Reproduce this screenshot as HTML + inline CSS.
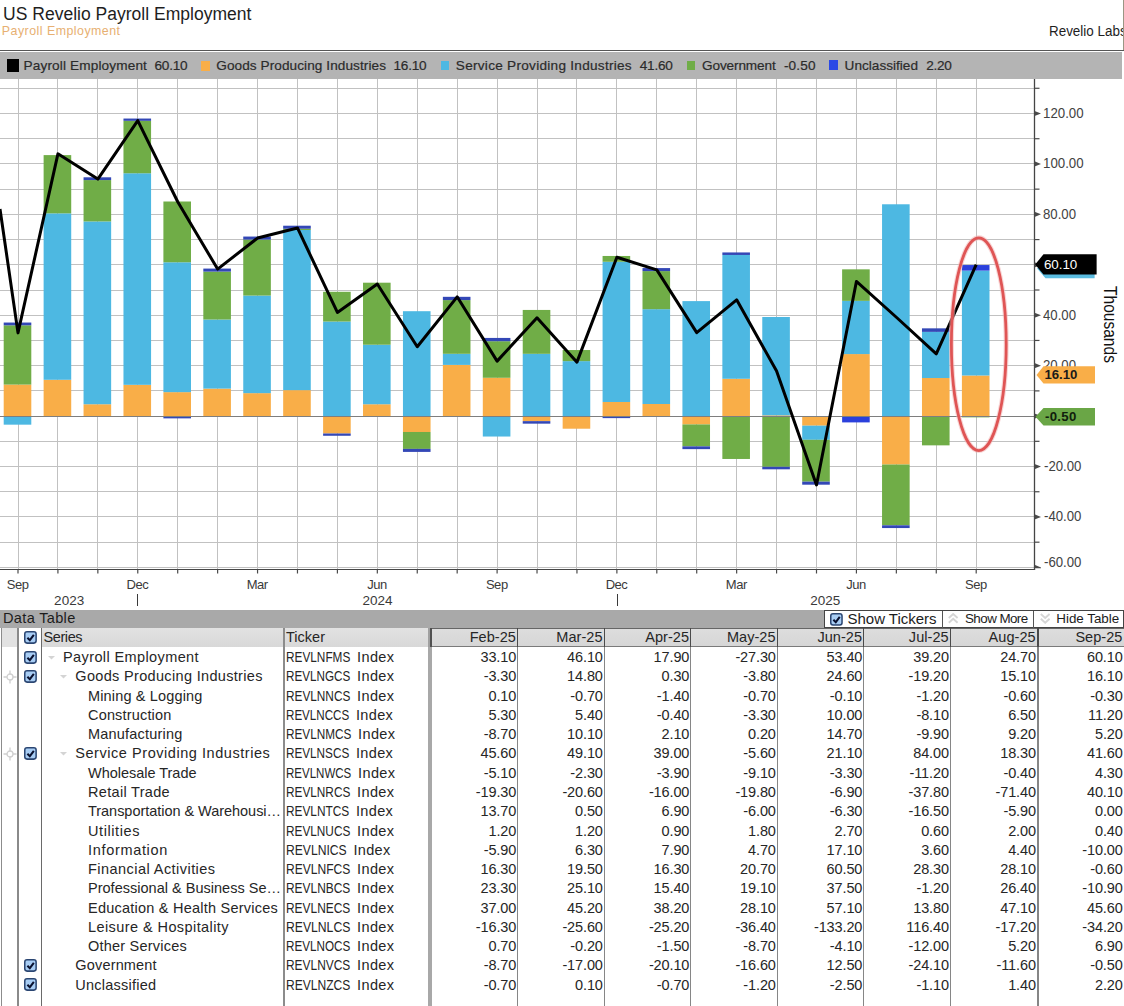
<!DOCTYPE html>
<html><head><meta charset="utf-8"><title>US Revelio Payroll Employment</title>
<style>
html,body{margin:0;padding:0;background:#fff;}
html,body{width:1124px;height:1006px;overflow:hidden;}
body{font-family:"Liberation Sans",sans-serif;}
#root{position:absolute;left:0;top:0;width:1124px;height:1006px;overflow:hidden;background:#fff;}
.t{position:absolute;white-space:pre;font-family:"Liberation Sans",sans-serif;}
.b{position:absolute;}
svg{position:absolute;left:0;top:0;}
</style></head><body><div id="root">
<div class="t" style="left:3.40px;top:4px;font-size:18px;line-height:20px;color:#1e1e1e;transform:scaleX(0.9738);transform-origin:left top;">US Revelio Payroll Employment</div>
<div class="t" style="left:1.80px;top:24px;font-size:12.4px;line-height:14px;color:#e7b072;letter-spacing:0.474px;">Payroll Employment</div>
<div class="t" style="left:1049.40px;top:23px;font-size:14px;line-height:16px;color:#1e1e1e;transform:scaleX(0.9588);transform-origin:left top;">Revelio Labs</div>
<div class="b" style="left:1122.7px;top:0;width:1px;height:50px;background:#9a9684"></div>
<div class="b" style="left:0;top:49.5px;width:1124px;height:1.2px;background:#555"></div>
<div class="b" style="left:0;top:51.5px;width:1122px;height:27.3px;background:#b4b4b4"></div>
<div class="b" style="left:7px;top:59.2px;width:12px;height:12.7px;background:#000"></div>
<div class="t" style="left:23.60px;top:58px;font-size:13.6px;line-height:15px;color:#2b2b2b;letter-spacing:0.143px;-webkit-text-stroke:0.2px #2b2b2b;">Payroll Employment</div>
<div class="t" style="left:154.50px;top:58px;font-size:13.6px;line-height:15px;color:#2b2b2b;letter-spacing:-0.247px;-webkit-text-stroke:0.2px #2b2b2b;">60.10</div>
<div class="b" style="left:200.8px;top:61px;width:9.6px;height:9.6px;background:#F9AE48"></div>
<div class="t" style="left:216.30px;top:58px;font-size:13.6px;line-height:15px;color:#2b2b2b;letter-spacing:0.076px;-webkit-text-stroke:0.2px #2b2b2b;">Goods Producing Industries</div>
<div class="t" style="left:393.50px;top:58px;font-size:13.6px;line-height:15px;color:#2b2b2b;letter-spacing:-0.247px;-webkit-text-stroke:0.2px #2b2b2b;">16.10</div>
<div class="b" style="left:440.5px;top:60.8px;width:8.6px;height:9.2px;background:#4DB8E2"></div>
<div class="t" style="left:455.80px;top:58px;font-size:13.6px;line-height:15px;color:#2b2b2b;letter-spacing:0.273px;-webkit-text-stroke:0.2px #2b2b2b;">Service Providing Industries</div>
<div class="t" style="left:639.80px;top:58px;font-size:13.6px;line-height:15px;color:#2b2b2b;letter-spacing:-0.247px;-webkit-text-stroke:0.2px #2b2b2b;">41.60</div>
<div class="b" style="left:686.8px;top:60.8px;width:8.6px;height:9.2px;background:#70AD47"></div>
<div class="t" style="left:702.00px;top:58px;font-size:13.6px;line-height:15px;color:#2b2b2b;letter-spacing:-0.123px;-webkit-text-stroke:0.2px #2b2b2b;">Government</div>
<div class="t" style="left:783.90px;top:58px;font-size:13.6px;line-height:15px;color:#2b2b2b;letter-spacing:0.160px;-webkit-text-stroke:0.2px #2b2b2b;">-0.50</div>
<div class="b" style="left:829.4px;top:60.2px;width:9px;height:9.8px;background:#2b49e6"></div>
<div class="t" style="left:844.60px;top:58px;font-size:13.6px;line-height:15px;color:#2b2b2b;letter-spacing:0.007px;-webkit-text-stroke:0.2px #2b2b2b;">Unclassified</div>
<div class="t" style="left:926.30px;top:58px;font-size:13.6px;line-height:15px;color:#2b2b2b;letter-spacing:-0.317px;-webkit-text-stroke:0.2px #2b2b2b;">2.20</div>
<svg width="1124" height="612" viewBox="0 0 1124 612">
<line x1="0" x2="1034.5" y1="567.50" y2="567.50" stroke="#c1c1c1" stroke-width="1"/>
<line x1="0" x2="1034.5" y1="542.50" y2="542.50" stroke="#c1c1c1" stroke-width="1"/>
<line x1="0" x2="1034.5" y1="516.50" y2="516.50" stroke="#c1c1c1" stroke-width="1"/>
<line x1="0" x2="1034.5" y1="491.50" y2="491.50" stroke="#c1c1c1" stroke-width="1"/>
<line x1="0" x2="1034.5" y1="466.50" y2="466.50" stroke="#c1c1c1" stroke-width="1"/>
<line x1="0" x2="1034.5" y1="441.50" y2="441.50" stroke="#c1c1c1" stroke-width="1"/>
<line x1="0" x2="1034.5" y1="390.50" y2="390.50" stroke="#c1c1c1" stroke-width="1"/>
<line x1="0" x2="1034.5" y1="365.50" y2="365.50" stroke="#c1c1c1" stroke-width="1"/>
<line x1="0" x2="1034.5" y1="340.50" y2="340.50" stroke="#c1c1c1" stroke-width="1"/>
<line x1="0" x2="1034.5" y1="315.50" y2="315.50" stroke="#c1c1c1" stroke-width="1"/>
<line x1="0" x2="1034.5" y1="290.50" y2="290.50" stroke="#c1c1c1" stroke-width="1"/>
<line x1="0" x2="1034.5" y1="264.50" y2="264.50" stroke="#c1c1c1" stroke-width="1"/>
<line x1="0" x2="1034.5" y1="239.50" y2="239.50" stroke="#c1c1c1" stroke-width="1"/>
<line x1="0" x2="1034.5" y1="214.50" y2="214.50" stroke="#c1c1c1" stroke-width="1"/>
<line x1="0" x2="1034.5" y1="189.50" y2="189.50" stroke="#c1c1c1" stroke-width="1"/>
<line x1="0" x2="1034.5" y1="163.50" y2="163.50" stroke="#c1c1c1" stroke-width="1"/>
<line x1="0" x2="1034.5" y1="138.50" y2="138.50" stroke="#c1c1c1" stroke-width="1"/>
<line x1="0" x2="1034.5" y1="113.50" y2="113.50" stroke="#c1c1c1" stroke-width="1"/>
<line x1="0" x2="1034.5" y1="88.50" y2="88.50" stroke="#c1c1c1" stroke-width="1"/>
<line x1="18.50" x2="18.50" y1="79" y2="569.5" stroke="#c1c1c1" stroke-width="1"/>
<line x1="57.50" x2="57.50" y1="79" y2="569.5" stroke="#c1c1c1" stroke-width="1"/>
<line x1="97.50" x2="97.50" y1="79" y2="569.5" stroke="#c1c1c1" stroke-width="1"/>
<line x1="137.50" x2="137.50" y1="79" y2="569.5" stroke="#c1c1c1" stroke-width="1"/>
<line x1="177.50" x2="177.50" y1="79" y2="569.5" stroke="#c1c1c1" stroke-width="1"/>
<line x1="217.50" x2="217.50" y1="79" y2="569.5" stroke="#c1c1c1" stroke-width="1"/>
<line x1="257.50" x2="257.50" y1="79" y2="569.5" stroke="#c1c1c1" stroke-width="1"/>
<line x1="297.50" x2="297.50" y1="79" y2="569.5" stroke="#c1c1c1" stroke-width="1"/>
<line x1="337.50" x2="337.50" y1="79" y2="569.5" stroke="#c1c1c1" stroke-width="1"/>
<line x1="377.50" x2="377.50" y1="79" y2="569.5" stroke="#c1c1c1" stroke-width="1"/>
<line x1="417.50" x2="417.50" y1="79" y2="569.5" stroke="#c1c1c1" stroke-width="1"/>
<line x1="457.50" x2="457.50" y1="79" y2="569.5" stroke="#c1c1c1" stroke-width="1"/>
<line x1="497.50" x2="497.50" y1="79" y2="569.5" stroke="#c1c1c1" stroke-width="1"/>
<line x1="537.50" x2="537.50" y1="79" y2="569.5" stroke="#c1c1c1" stroke-width="1"/>
<line x1="576.50" x2="576.50" y1="79" y2="569.5" stroke="#c1c1c1" stroke-width="1"/>
<line x1="616.50" x2="616.50" y1="79" y2="569.5" stroke="#c1c1c1" stroke-width="1"/>
<line x1="656.50" x2="656.50" y1="79" y2="569.5" stroke="#c1c1c1" stroke-width="1"/>
<line x1="696.50" x2="696.50" y1="79" y2="569.5" stroke="#c1c1c1" stroke-width="1"/>
<line x1="736.50" x2="736.50" y1="79" y2="569.5" stroke="#c1c1c1" stroke-width="1"/>
<line x1="776.50" x2="776.50" y1="79" y2="569.5" stroke="#c1c1c1" stroke-width="1"/>
<line x1="816.50" x2="816.50" y1="79" y2="569.5" stroke="#c1c1c1" stroke-width="1"/>
<line x1="856.50" x2="856.50" y1="79" y2="569.5" stroke="#c1c1c1" stroke-width="1"/>
<line x1="896.50" x2="896.50" y1="79" y2="569.5" stroke="#c1c1c1" stroke-width="1"/>
<line x1="936.50" x2="936.50" y1="79" y2="569.5" stroke="#c1c1c1" stroke-width="1"/>
<line x1="976.50" x2="976.50" y1="79" y2="569.5" stroke="#c1c1c1" stroke-width="1"/>
<rect x="3.70" y="384.58" width="27.6" height="31.52" fill="#F9AE48"/>
<rect x="3.70" y="416.10" width="27.6" height="8.57" fill="#4DB8E2"/>
<rect x="3.70" y="325.32" width="27.6" height="59.26" fill="#70AD47"/>
<rect x="3.70" y="322.54" width="27.6" height="2.77" fill="#3347B6"/>
<rect x="43.62" y="379.79" width="27.6" height="36.31" fill="#F9AE48"/>
<rect x="43.62" y="213.36" width="27.6" height="166.43" fill="#4DB8E2"/>
<rect x="43.62" y="155.10" width="27.6" height="58.25" fill="#70AD47"/>
<rect x="83.55" y="404.25" width="27.6" height="11.85" fill="#F9AE48"/>
<rect x="83.55" y="221.42" width="27.6" height="182.82" fill="#4DB8E2"/>
<rect x="83.55" y="180.07" width="27.6" height="41.36" fill="#70AD47"/>
<rect x="83.55" y="177.30" width="27.6" height="2.77" fill="#3347B6"/>
<rect x="123.47" y="384.83" width="27.6" height="31.27" fill="#F9AE48"/>
<rect x="123.47" y="173.26" width="27.6" height="211.57" fill="#4DB8E2"/>
<rect x="123.47" y="120.81" width="27.6" height="52.45" fill="#70AD47"/>
<rect x="123.47" y="118.54" width="27.6" height="2.27" fill="#3347B6"/>
<rect x="163.40" y="392.14" width="27.6" height="23.96" fill="#F9AE48"/>
<rect x="163.40" y="262.28" width="27.6" height="129.87" fill="#4DB8E2"/>
<rect x="163.40" y="201.50" width="27.6" height="60.77" fill="#70AD47"/>
<rect x="163.40" y="416.10" width="27.6" height="2.27" fill="#3347B6"/>
<rect x="203.32" y="388.61" width="27.6" height="27.49" fill="#F9AE48"/>
<rect x="203.32" y="319.52" width="27.6" height="69.09" fill="#4DB8E2"/>
<rect x="203.32" y="271.61" width="27.6" height="47.91" fill="#70AD47"/>
<rect x="203.32" y="268.58" width="27.6" height="3.03" fill="#3347B6"/>
<rect x="243.25" y="393.15" width="27.6" height="22.95" fill="#F9AE48"/>
<rect x="243.25" y="295.56" width="27.6" height="97.59" fill="#4DB8E2"/>
<rect x="243.25" y="239.58" width="27.6" height="55.98" fill="#70AD47"/>
<rect x="243.25" y="236.55" width="27.6" height="3.03" fill="#3347B6"/>
<rect x="283.17" y="390.13" width="27.6" height="25.97" fill="#F9AE48"/>
<rect x="283.17" y="230.00" width="27.6" height="160.13" fill="#4DB8E2"/>
<rect x="283.17" y="228.74" width="27.6" height="1.26" fill="#70AD47"/>
<rect x="283.17" y="225.71" width="27.6" height="3.03" fill="#3347B6"/>
<rect x="323.10" y="416.10" width="27.6" height="17.40" fill="#F9AE48"/>
<rect x="323.10" y="321.54" width="27.6" height="94.56" fill="#4DB8E2"/>
<rect x="323.10" y="291.78" width="27.6" height="29.76" fill="#70AD47"/>
<rect x="323.10" y="433.50" width="27.6" height="2.27" fill="#3347B6"/>
<rect x="363.02" y="404.25" width="27.6" height="11.85" fill="#F9AE48"/>
<rect x="363.02" y="344.74" width="27.6" height="59.51" fill="#4DB8E2"/>
<rect x="363.02" y="282.70" width="27.6" height="62.03" fill="#70AD47"/>
<rect x="402.95" y="416.10" width="27.6" height="15.89" fill="#F9AE48"/>
<rect x="402.95" y="311.20" width="27.6" height="104.90" fill="#4DB8E2"/>
<rect x="402.95" y="431.99" width="27.6" height="16.90" fill="#70AD47"/>
<rect x="402.95" y="448.88" width="27.6" height="3.03" fill="#3347B6"/>
<rect x="442.87" y="364.91" width="27.6" height="51.19" fill="#F9AE48"/>
<rect x="442.87" y="353.81" width="27.6" height="11.10" fill="#4DB8E2"/>
<rect x="442.87" y="300.10" width="27.6" height="53.71" fill="#70AD47"/>
<rect x="442.87" y="296.82" width="27.6" height="3.28" fill="#3347B6"/>
<rect x="482.80" y="377.77" width="27.6" height="38.33" fill="#F9AE48"/>
<rect x="482.80" y="416.10" width="27.6" height="20.43" fill="#4DB8E2"/>
<rect x="482.80" y="341.21" width="27.6" height="36.56" fill="#70AD47"/>
<rect x="482.80" y="337.93" width="27.6" height="3.28" fill="#3347B6"/>
<rect x="522.73" y="416.10" width="27.6" height="5.04" fill="#F9AE48"/>
<rect x="522.73" y="353.81" width="27.6" height="62.29" fill="#4DB8E2"/>
<rect x="522.73" y="309.94" width="27.6" height="43.88" fill="#70AD47"/>
<rect x="522.73" y="421.14" width="27.6" height="2.52" fill="#3347B6"/>
<rect x="562.65" y="416.10" width="27.6" height="12.61" fill="#F9AE48"/>
<rect x="562.65" y="361.13" width="27.6" height="54.97" fill="#4DB8E2"/>
<rect x="562.65" y="350.03" width="27.6" height="11.10" fill="#70AD47"/>
<rect x="602.58" y="401.98" width="27.6" height="14.12" fill="#F9AE48"/>
<rect x="602.58" y="261.77" width="27.6" height="140.21" fill="#4DB8E2"/>
<rect x="602.58" y="255.97" width="27.6" height="5.80" fill="#70AD47"/>
<rect x="602.58" y="416.10" width="27.6" height="2.02" fill="#3347B6"/>
<rect x="642.50" y="404.00" width="27.6" height="12.10" fill="#F9AE48"/>
<rect x="642.50" y="309.18" width="27.6" height="94.82" fill="#4DB8E2"/>
<rect x="642.50" y="271.10" width="27.6" height="38.08" fill="#70AD47"/>
<rect x="642.50" y="268.08" width="27.6" height="3.03" fill="#3347B6"/>
<rect x="682.42" y="416.10" width="27.6" height="8.32" fill="#F9AE48"/>
<rect x="682.42" y="301.11" width="27.6" height="114.99" fill="#4DB8E2"/>
<rect x="682.42" y="424.42" width="27.6" height="21.94" fill="#70AD47"/>
<rect x="682.42" y="446.36" width="27.6" height="2.77" fill="#3347B6"/>
<rect x="722.35" y="378.78" width="27.6" height="37.32" fill="#F9AE48"/>
<rect x="722.35" y="254.96" width="27.6" height="123.82" fill="#4DB8E2"/>
<rect x="722.35" y="416.10" width="27.6" height="42.87" fill="#70AD47"/>
<rect x="722.35" y="252.44" width="27.6" height="2.52" fill="#3347B6"/>
<rect x="762.27" y="415.34" width="27.6" height="1.20" fill="#F9AE48"/>
<rect x="762.27" y="317.00" width="27.6" height="98.35" fill="#4DB8E2"/>
<rect x="762.27" y="416.10" width="27.6" height="50.69" fill="#70AD47"/>
<rect x="762.27" y="466.79" width="27.6" height="2.52" fill="#3347B6"/>
<rect x="802.20" y="416.10" width="27.6" height="9.58" fill="#F9AE48"/>
<rect x="802.20" y="425.68" width="27.6" height="14.12" fill="#4DB8E2"/>
<rect x="802.20" y="439.80" width="27.6" height="41.86" fill="#70AD47"/>
<rect x="802.20" y="481.66" width="27.6" height="3.03" fill="#3347B6"/>
<rect x="842.12" y="354.07" width="27.6" height="62.03" fill="#F9AE48"/>
<rect x="842.12" y="300.86" width="27.6" height="53.21" fill="#4DB8E2"/>
<rect x="842.12" y="269.34" width="27.6" height="31.52" fill="#70AD47"/>
<rect x="842.12" y="416.10" width="27.6" height="6.30" fill="#2B40DC"/>
<rect x="882.05" y="416.10" width="27.6" height="48.42" fill="#F9AE48"/>
<rect x="882.05" y="204.28" width="27.6" height="211.82" fill="#4DB8E2"/>
<rect x="882.05" y="464.52" width="27.6" height="60.77" fill="#70AD47"/>
<rect x="882.05" y="525.29" width="27.6" height="2.77" fill="#3347B6"/>
<rect x="921.98" y="378.02" width="27.6" height="38.08" fill="#F9AE48"/>
<rect x="921.98" y="331.88" width="27.6" height="46.15" fill="#4DB8E2"/>
<rect x="921.98" y="416.10" width="27.6" height="29.25" fill="#70AD47"/>
<rect x="921.98" y="328.34" width="27.6" height="3.53" fill="#3347B6"/>
<rect x="961.90" y="375.50" width="27.6" height="40.60" fill="#F9AE48"/>
<rect x="961.90" y="270.60" width="27.6" height="104.90" fill="#4DB8E2"/>
<rect x="961.90" y="416.10" width="27.6" height="1.26" fill="#70AD47"/>
<rect x="961.90" y="265.05" width="27.6" height="5.55" fill="#2B40DC"/>
<line x1="0" x2="1034.5" y1="416.5" y2="416.5" stroke="#7e7e7e" stroke-width="1"/>
<polyline fill="none" stroke="#000" stroke-width="3" stroke-linejoin="round" stroke-linecap="butt" points="0.00,209.00 18.00,332.88 57.92,153.84 97.85,179.06 137.77,120.56 177.70,201.76 217.62,269.08 257.55,238.07 297.47,227.98 337.40,312.46 377.32,283.96 417.25,346.75 457.17,296.82 497.10,361.13 537.02,317.75 576.95,362.14 616.88,257.23 656.80,269.84 696.72,332.63 736.65,299.85 776.57,370.96 816.50,484.94 856.42,281.44 896.35,317.25 936.27,353.81 976.20,264.55"/>
<ellipse cx="978.8" cy="344.2" rx="27.4" ry="106.4" fill="none" stroke="#f3b5b5" stroke-width="5" opacity="0.55"/>
<ellipse cx="978.8" cy="344.2" rx="27.4" ry="106.4" fill="none" stroke="#df5555" stroke-width="2.8"/>
<line x1="1034.5" x2="1034.5" y1="79" y2="570.0" stroke="#454545" stroke-width="1.3"/>
<line x1="0" x2="1035.1" y1="569.5" y2="569.5" stroke="#454545" stroke-width="1.1"/>
<line x1="18.00" x2="18.00" y1="569.5" y2="573.5" stroke="#4a4a4a" stroke-width="1.2"/>
<line x1="57.92" x2="57.92" y1="569.5" y2="573.5" stroke="#4a4a4a" stroke-width="1.2"/>
<line x1="97.85" x2="97.85" y1="569.5" y2="573.5" stroke="#4a4a4a" stroke-width="1.2"/>
<line x1="137.77" x2="137.77" y1="569.5" y2="573.5" stroke="#4a4a4a" stroke-width="1.2"/>
<line x1="177.70" x2="177.70" y1="569.5" y2="573.5" stroke="#4a4a4a" stroke-width="1.2"/>
<line x1="217.62" x2="217.62" y1="569.5" y2="573.5" stroke="#4a4a4a" stroke-width="1.2"/>
<line x1="257.55" x2="257.55" y1="569.5" y2="573.5" stroke="#4a4a4a" stroke-width="1.2"/>
<line x1="297.47" x2="297.47" y1="569.5" y2="573.5" stroke="#4a4a4a" stroke-width="1.2"/>
<line x1="337.40" x2="337.40" y1="569.5" y2="573.5" stroke="#4a4a4a" stroke-width="1.2"/>
<line x1="377.32" x2="377.32" y1="569.5" y2="573.5" stroke="#4a4a4a" stroke-width="1.2"/>
<line x1="417.25" x2="417.25" y1="569.5" y2="573.5" stroke="#4a4a4a" stroke-width="1.2"/>
<line x1="457.17" x2="457.17" y1="569.5" y2="573.5" stroke="#4a4a4a" stroke-width="1.2"/>
<line x1="497.10" x2="497.10" y1="569.5" y2="573.5" stroke="#4a4a4a" stroke-width="1.2"/>
<line x1="537.02" x2="537.02" y1="569.5" y2="573.5" stroke="#4a4a4a" stroke-width="1.2"/>
<line x1="576.95" x2="576.95" y1="569.5" y2="573.5" stroke="#4a4a4a" stroke-width="1.2"/>
<line x1="616.88" x2="616.88" y1="569.5" y2="573.5" stroke="#4a4a4a" stroke-width="1.2"/>
<line x1="656.80" x2="656.80" y1="569.5" y2="573.5" stroke="#4a4a4a" stroke-width="1.2"/>
<line x1="696.72" x2="696.72" y1="569.5" y2="573.5" stroke="#4a4a4a" stroke-width="1.2"/>
<line x1="736.65" x2="736.65" y1="569.5" y2="573.5" stroke="#4a4a4a" stroke-width="1.2"/>
<line x1="776.57" x2="776.57" y1="569.5" y2="573.5" stroke="#4a4a4a" stroke-width="1.2"/>
<line x1="816.50" x2="816.50" y1="569.5" y2="573.5" stroke="#4a4a4a" stroke-width="1.2"/>
<line x1="856.42" x2="856.42" y1="569.5" y2="573.5" stroke="#4a4a4a" stroke-width="1.2"/>
<line x1="896.35" x2="896.35" y1="569.5" y2="573.5" stroke="#4a4a4a" stroke-width="1.2"/>
<line x1="936.27" x2="936.27" y1="569.5" y2="573.5" stroke="#4a4a4a" stroke-width="1.2"/>
<line x1="976.20" x2="976.20" y1="569.5" y2="573.5" stroke="#4a4a4a" stroke-width="1.2"/>
<path d="M1034.5 564.80 L1041.0 567.40 L1041.0 568.20 L1034.5 568.20 Z" fill="#4a4a4a"/>
<line x1="1034.5" x2="1039.5" y1="542.19" y2="542.19" stroke="#4a4a4a" stroke-width="1.2"/>
<path d="M1034.5 514.37 L1041.0 516.97 L1034.5 519.57 Z" fill="#4a4a4a"/>
<line x1="1034.5" x2="1039.5" y1="491.75" y2="491.75" stroke="#4a4a4a" stroke-width="1.2"/>
<path d="M1034.5 463.93 L1041.0 466.53 L1034.5 469.13 Z" fill="#4a4a4a"/>
<line x1="1034.5" x2="1039.5" y1="441.32" y2="441.32" stroke="#4a4a4a" stroke-width="1.2"/>
<path d="M1034.5 413.50 L1041.0 416.10 L1034.5 418.70 Z" fill="#4a4a4a"/>
<line x1="1034.5" x2="1039.5" y1="390.88" y2="390.88" stroke="#4a4a4a" stroke-width="1.2"/>
<path d="M1034.5 363.07 L1041.0 365.67 L1034.5 368.27 Z" fill="#4a4a4a"/>
<line x1="1034.5" x2="1039.5" y1="340.45" y2="340.45" stroke="#4a4a4a" stroke-width="1.2"/>
<path d="M1034.5 312.63 L1041.0 315.23 L1034.5 317.83 Z" fill="#4a4a4a"/>
<line x1="1034.5" x2="1039.5" y1="290.01" y2="290.01" stroke="#4a4a4a" stroke-width="1.2"/>
<path d="M1034.5 262.20 L1041.0 264.80 L1034.5 267.40 Z" fill="#4a4a4a"/>
<line x1="1034.5" x2="1039.5" y1="239.58" y2="239.58" stroke="#4a4a4a" stroke-width="1.2"/>
<path d="M1034.5 211.76 L1041.0 214.36 L1034.5 216.96 Z" fill="#4a4a4a"/>
<line x1="1034.5" x2="1039.5" y1="189.15" y2="189.15" stroke="#4a4a4a" stroke-width="1.2"/>
<path d="M1034.5 161.33 L1041.0 163.93 L1034.5 166.53 Z" fill="#4a4a4a"/>
<line x1="1034.5" x2="1039.5" y1="138.71" y2="138.71" stroke="#4a4a4a" stroke-width="1.2"/>
<path d="M1034.5 110.90 L1041.0 113.50 L1034.5 116.10 Z" fill="#4a4a4a"/>
<line x1="1034.5" x2="1039.5" y1="88.28" y2="88.28" stroke="#4a4a4a" stroke-width="1.2"/>
</svg>
<div class="t" style="left:1044.20px;top:554px;font-size:14px;line-height:16px;color:#424242;transform:scaleX(0.9421);transform-origin:left top;">-60.00</div>
<div class="t" style="left:1044.20px;top:508px;font-size:14px;line-height:16px;color:#424242;transform:scaleX(0.9421);transform-origin:left top;">-40.00</div>
<div class="t" style="left:1044.20px;top:458px;font-size:14px;line-height:16px;color:#424242;transform:scaleX(0.9421);transform-origin:left top;">-20.00</div>
<div class="t" style="left:1043.20px;top:407px;font-size:14px;line-height:16px;color:#424242;transform:scaleX(1.2111);transform-origin:left top;">0.00</div>
<div class="t" style="left:1043.20px;top:357px;font-size:14px;line-height:16px;color:#424242;transform:scaleX(0.9419);transform-origin:left top;">20.00</div>
<div class="t" style="left:1043.20px;top:307px;font-size:14px;line-height:16px;color:#424242;transform:scaleX(0.9419);transform-origin:left top;">40.00</div>
<div class="t" style="left:1043.20px;top:256px;font-size:14px;line-height:16px;color:#424242;transform:scaleX(0.9419);transform-origin:left top;">60.00</div>
<div class="t" style="left:1043.20px;top:206px;font-size:14px;line-height:16px;color:#424242;transform:scaleX(0.9419);transform-origin:left top;">80.00</div>
<div class="t" style="left:1043.20px;top:155px;font-size:14px;line-height:16px;color:#424242;transform:scaleX(0.9481);transform-origin:left top;">100.00</div>
<div class="t" style="left:1043.20px;top:105px;font-size:14px;line-height:16px;color:#424242;transform:scaleX(0.9481);transform-origin:left top;">120.00</div>
<svg width="1124" height="612" viewBox="0 0 1124 612">
<path d="M1037.2 268.60 L1045.5 258.90 L1094.6 258.90 L1094.6 278.30 L1045.5 278.30 Z" fill="#5bbce0"/>
<path d="M1035.2 264.40 L1043.5 254.30 L1096.6 254.30 L1096.6 274.50 L1043.5 274.50 Z" fill="#000"/>
<path d="M1036.5 374.90 L1043.5 366.20 L1095 366.20 L1095 383.60 L1043.5 383.60 Z" fill="#f9ae48"/>
<path d="M1035.5 416.70 L1043.5 407.90 L1095 407.90 L1095 425.50 L1043.5 425.50 Z" fill="#6aa646"/>
</svg>
<div class="t" style="left:1043.90px;top:257px;font-size:13.4px;line-height:15px;color:#fff;letter-spacing:-0.027px;">60.10</div>
<div class="t" style="left:1044.50px;top:367px;font-size:13.2px;line-height:15px;color:#1a1a1a;letter-spacing:-0.046px;font-weight:bold;">16.10</div>
<div class="t" style="left:1044.90px;top:409px;font-size:13.2px;line-height:15px;color:#10200c;letter-spacing:0.343px;font-weight:bold;">-0.50</div>
<div class="t" style="left:1103.5px;top:285.8px;font-size:17px;line-height:17px;color:#111;transform-origin:0 0;transform:rotate(90deg) scale(0.9143,1.07) translate(0,-14px)">Thousands</div>
<div class="t" style="left:6.78px;top:577px;font-size:13px;line-height:15px;color:#3a3a3a;letter-spacing:-0.450px;">Sep</div>
<div class="t" style="left:126.57px;top:577px;font-size:13px;line-height:15px;color:#3a3a3a;letter-spacing:-0.450px;">Dec</div>
<div class="t" style="left:246.71px;top:577px;font-size:13px;line-height:15px;color:#3a3a3a;letter-spacing:-0.450px;">Mar</div>
<div class="t" style="left:367.19px;top:577px;font-size:13px;line-height:15px;color:#3a3a3a;letter-spacing:-0.450px;">Jun</div>
<div class="t" style="left:485.88px;top:577px;font-size:13px;line-height:15px;color:#3a3a3a;letter-spacing:-0.450px;">Sep</div>
<div class="t" style="left:605.67px;top:577px;font-size:13px;line-height:15px;color:#3a3a3a;letter-spacing:-0.450px;">Dec</div>
<div class="t" style="left:725.81px;top:577px;font-size:13px;line-height:15px;color:#3a3a3a;letter-spacing:-0.450px;">Mar</div>
<div class="t" style="left:846.29px;top:577px;font-size:13px;line-height:15px;color:#3a3a3a;letter-spacing:-0.450px;">Jun</div>
<div class="t" style="left:964.98px;top:577px;font-size:13px;line-height:15px;color:#3a3a3a;letter-spacing:-0.450px;">Sep</div>
<div class="t" style="left:54.12px;top:593px;font-size:13.5px;line-height:15px;color:#3a3a3a;letter-spacing:0.042px;">2023</div>
<div class="t" style="left:362.42px;top:593px;font-size:13.5px;line-height:15px;color:#3a3a3a;letter-spacing:0.042px;">2024</div>
<div class="t" style="left:810.22px;top:593px;font-size:13.5px;line-height:15px;color:#3a3a3a;letter-spacing:0.042px;">2025</div>
<div class="b" style="left:137px;top:594px;width:1px;height:11.5px;background:#3a3a3a"></div>
<div class="b" style="left:617px;top:594px;width:1px;height:11.5px;background:#3a3a3a"></div>
<div class="b" style="left:0;top:610px;width:1124px;height:18.2px;background:#a9a9a9"></div>
<div class="t" style="left:3.00px;top:610px;font-size:14.6px;line-height:16px;color:#1c1c1c;letter-spacing:0.306px;">Data Table</div>
<div class="b" style="left:823.8px;top:610.2px;width:298.2px;height:16.2px;background:#fff;border:1px solid #444;box-sizing:content-box"></div>
<div class="b" style="left:942.2px;top:611px;width:1.2px;height:17px;background:#555"></div>
<div class="b" style="left:1032.8px;top:611px;width:1.2px;height:17px;background:#555"></div>
<svg style="left:830.4px;top:613.2px" width="12.8" height="12.8" viewBox="0 0 12.6 12.6"><rect x="0.75" y="0.75" width="11.1" height="11.1" rx="2.2" ry="2.2" fill="#a8cdf4" stroke="#2b4672" stroke-width="1.5"/><path d="M3.3 6.6 L5.7 9 L9.6 3.9" fill="none" stroke="#0b1230" stroke-width="2"/></svg>
<div class="t" style="left:847.60px;top:610px;font-size:15px;line-height:17px;color:#1c1c1c;letter-spacing:-0.033px;">Show Tickers</div>
<svg style="left:948.2px;top:613.2px" width="10.4" height="10.8" viewBox="0 0 10.4 10.8"><path d="M0.8 5 L5.2 1 L9.6 5 M0.8 9.8 L5.2 5.8 L9.6 9.8" fill="none" stroke="#d6d6d6" stroke-width="1.9"/></svg>
<div class="t" style="left:965.00px;top:611px;font-size:13.4px;line-height:15px;color:#1c1c1c;letter-spacing:-0.564px;">Show More</div>
<svg style="left:1039.8px;top:613.2px" width="10.4" height="10.8" viewBox="0 0 10.4 10.8"><path d="M0.8 1 L5.2 5 L9.6 1 M0.8 5.8 L5.2 9.8 L9.6 5.8" fill="none" stroke="#d6d6d6" stroke-width="1.9"/></svg>
<div class="t" style="left:1056.30px;top:611px;font-size:13.4px;line-height:15px;color:#1c1c1c;letter-spacing:-0.017px;">Hide Table</div>
<div class="b" style="left:2px;top:628.2px;width:16px;height:18.59999999999991px;background:#e2e2e2"></div>
<div class="b" style="left:42px;top:628.2px;width:388px;height:18.59999999999991px;background:linear-gradient(#e2e2e2,#d8d8d8)"></div>
<div class="b" style="left:431px;top:628.2px;width:693px;height:18.59999999999991px;background:linear-gradient(#dddddd,#d6d6d6);border-top:1px solid #666;border-bottom:1px solid #7a7a7a;box-sizing:border-box"></div>
<div class="b" style="left:1px;top:628px;width:1px;height:378px;background:#8c8c8c"></div>
<div class="b" style="left:17.2px;top:628px;width:1.9px;height:378px;background:#8a8a8a"></div>
<div class="b" style="left:41.1px;top:628px;width:1.2px;height:378px;background:#6a6a6a"></div>
<div class="b" style="left:283.3px;top:628px;width:1.3px;height:378px;background:#8c8c8c"></div>
<div class="b" style="left:427.9px;top:628.2px;width:1.8px;height:18.59999999999991px;background:#a0a0a0"></div>
<div class="b" style="left:429.7px;top:628.2px;width:2.1px;height:18.59999999999991px;background:#505050"></div>
<div class="b" style="left:428.3px;top:646.8px;width:3.3px;height:359.20000000000005px;background:#a8a8a8"></div>
<div class="b" style="left:517px;top:628.2px;width:1.0px;height:18.59999999999991px;background:#4a4a4a"></div>
<div class="b" style="left:517px;top:646.8px;width:1.0px;height:359.20000000000005px;background:#868686"></div>
<div class="b" style="left:604px;top:628.2px;width:1.0px;height:18.59999999999991px;background:#4a4a4a"></div>
<div class="b" style="left:604px;top:646.8px;width:1.0px;height:359.20000000000005px;background:#868686"></div>
<div class="b" style="left:690px;top:628.2px;width:1.0px;height:18.59999999999991px;background:#4a4a4a"></div>
<div class="b" style="left:690px;top:646.8px;width:1.0px;height:359.20000000000005px;background:#868686"></div>
<div class="b" style="left:777px;top:628.2px;width:1.0px;height:18.59999999999991px;background:#4a4a4a"></div>
<div class="b" style="left:777px;top:646.8px;width:1.0px;height:359.20000000000005px;background:#868686"></div>
<div class="b" style="left:863px;top:628.2px;width:1.0px;height:18.59999999999991px;background:#4a4a4a"></div>
<div class="b" style="left:863px;top:646.8px;width:1.0px;height:359.20000000000005px;background:#868686"></div>
<div class="b" style="left:950px;top:628.2px;width:1.0px;height:18.59999999999991px;background:#4a4a4a"></div>
<div class="b" style="left:950px;top:646.8px;width:1.0px;height:359.20000000000005px;background:#868686"></div>
<div class="b" style="left:1037px;top:628.2px;width:1.5px;height:18.59999999999991px;background:#4a4a4a"></div>
<div class="b" style="left:1037px;top:646.8px;width:1.5px;height:359.20000000000005px;background:#868686"></div>
<svg style="left:24.3px;top:631.1px" width="12.9" height="12.9" viewBox="0 0 12.6 12.6"><rect x="0.75" y="0.75" width="11.1" height="11.1" rx="2.2" ry="2.2" fill="#a8cdf4" stroke="#2b4672" stroke-width="1.5"/><path d="M3.3 6.6 L5.7 9 L9.6 3.9" fill="none" stroke="#0b1230" stroke-width="2"/></svg>
<div class="t" style="left:43.60px;top:629px;font-size:14.5px;line-height:16px;color:#262626;letter-spacing:-0.433px;">Series</div>
<div class="t" style="left:286.00px;top:629px;font-size:14.5px;line-height:16px;color:#262626;letter-spacing:0.011px;">Ticker</div>
<div class="t" style="left:469.71px;top:629px;font-size:14.5px;line-height:16px;color:#262626;letter-spacing:0.050px;">Feb-25</div>
<div class="t" style="left:556.32px;top:629px;font-size:14.5px;line-height:16px;color:#262626;letter-spacing:0.050px;">Mar-25</div>
<div class="t" style="left:645.23px;top:629px;font-size:14.5px;line-height:16px;color:#262626;letter-spacing:0.050px;">Apr-25</div>
<div class="t" style="left:726.90px;top:629px;font-size:14.5px;line-height:16px;color:#262626;letter-spacing:0.050px;">May-25</div>
<div class="t" style="left:817.41px;top:629px;font-size:14.5px;line-height:16px;color:#262626;letter-spacing:0.050px;">Jun-25</div>
<div class="t" style="left:908.86px;top:629px;font-size:14.5px;line-height:16px;color:#262626;letter-spacing:0.050px;">Jul-25</div>
<div class="t" style="left:988.59px;top:629px;font-size:14.5px;line-height:16px;color:#262626;letter-spacing:0.050px;">Aug-25</div>
<div class="t" style="left:1075.39px;top:629px;font-size:14.5px;line-height:16px;color:#262626;letter-spacing:0.050px;">Sep-25</div>
<svg style="left:24.3px;top:650.86px" width="12.9" height="12.9" viewBox="0 0 12.6 12.6"><rect x="0.75" y="0.75" width="11.1" height="11.1" rx="2.2" ry="2.2" fill="#a8cdf4" stroke="#2b4672" stroke-width="1.5"/><path d="M3.3 6.6 L5.7 9 L9.6 3.9" fill="none" stroke="#0b1230" stroke-width="2"/></svg>
<svg style="left:48.4px;top:655.66px" width="7" height="4" viewBox="0 0 7 4"><path d="M0 0 L7 0 L3.5 3.6 Z" fill="#d4d4d4"/></svg>
<div class="t" style="left:63.00px;top:649px;font-size:14.5px;line-height:16px;color:#262626;letter-spacing:0.392px;">Payroll Employment</div>
<div class="b" style="left:0;top:0"><div class="t" style="left:285.80px;top:649px;font-size:14.5px;line-height:16px;color:#262626;transform:scaleX(0.8144);transform-origin:left top;">REVLNFMS</div><div class="t" style="left:357.10px;top:649px;font-size:14.5px;line-height:16px;color:#262626;letter-spacing:0.346px;">Index</div></div>
<div class="t" style="left:480.49px;top:649px;font-size:14.5px;line-height:16px;color:#262626;letter-spacing:-0.120px;">33.10</div>
<div class="t" style="left:567.09px;top:649px;font-size:14.5px;line-height:16px;color:#262626;letter-spacing:-0.120px;">46.10</div>
<div class="t" style="left:653.59px;top:649px;font-size:14.5px;line-height:16px;color:#262626;letter-spacing:-0.120px;">17.90</div>
<div class="t" style="left:735.39px;top:649px;font-size:14.5px;line-height:16px;color:#262626;letter-spacing:-0.120px;">-27.30</div>
<div class="t" style="left:826.59px;top:649px;font-size:14.5px;line-height:16px;color:#262626;letter-spacing:-0.120px;">53.40</div>
<div class="t" style="left:913.19px;top:649px;font-size:14.5px;line-height:16px;color:#262626;letter-spacing:-0.120px;">39.20</div>
<div class="t" style="left:1000.19px;top:649px;font-size:14.5px;line-height:16px;color:#262626;letter-spacing:-0.120px;">24.70</div>
<div class="t" style="left:1086.99px;top:649px;font-size:14.5px;line-height:16px;color:#262626;letter-spacing:-0.120px;">60.10</div>
<svg style="left:24.3px;top:670.12px" width="12.9" height="12.9" viewBox="0 0 12.6 12.6"><rect x="0.75" y="0.75" width="11.1" height="11.1" rx="2.2" ry="2.2" fill="#a8cdf4" stroke="#2b4672" stroke-width="1.5"/><path d="M3.3 6.6 L5.7 9 L9.6 3.9" fill="none" stroke="#0b1230" stroke-width="2"/></svg>
<svg style="left:60.4px;top:674.92px" width="7" height="4" viewBox="0 0 7 4"><path d="M0 0 L7 0 L3.5 3.6 Z" fill="#d4d4d4"/></svg>
<svg style="left:3px;top:669.82px" width="14" height="14" viewBox="0 0 14 14"><circle cx="7" cy="7" r="3" fill="none" stroke="#cfcfcf" stroke-width="1.3"/><path d="M7 0.5 V4 M7 10 V13.5 M0.5 7 H4 M10 7 H13.5" stroke="#cfcfcf" stroke-width="1.3"/></svg>
<div class="t" style="left:75.30px;top:668px;font-size:14.5px;line-height:16px;color:#262626;letter-spacing:0.329px;">Goods Producing Industries</div>
<div class="b" style="left:0;top:0"><div class="t" style="left:285.80px;top:668px;font-size:14.5px;line-height:16px;color:#262626;transform:scaleX(0.8060);transform-origin:left top;">REVLNGCS</div><div class="t" style="left:357.10px;top:668px;font-size:14.5px;line-height:16px;color:#262626;letter-spacing:0.346px;">Index</div></div>
<div class="t" style="left:483.73px;top:668px;font-size:14.5px;line-height:16px;color:#262626;letter-spacing:-0.120px;">-3.30</div>
<div class="t" style="left:567.09px;top:668px;font-size:14.5px;line-height:16px;color:#262626;letter-spacing:-0.120px;">14.80</div>
<div class="t" style="left:661.54px;top:668px;font-size:14.5px;line-height:16px;color:#262626;letter-spacing:-0.120px;">0.30</div>
<div class="t" style="left:743.33px;top:668px;font-size:14.5px;line-height:16px;color:#262626;letter-spacing:-0.120px;">-3.80</div>
<div class="t" style="left:826.59px;top:668px;font-size:14.5px;line-height:16px;color:#262626;letter-spacing:-0.120px;">24.60</div>
<div class="t" style="left:908.49px;top:668px;font-size:14.5px;line-height:16px;color:#262626;letter-spacing:-0.120px;">-19.20</div>
<div class="t" style="left:1000.19px;top:668px;font-size:14.5px;line-height:16px;color:#262626;letter-spacing:-0.120px;">15.10</div>
<div class="t" style="left:1086.99px;top:668px;font-size:14.5px;line-height:16px;color:#262626;letter-spacing:-0.120px;">16.10</div>
<div class="t" style="left:88.00px;top:688px;font-size:14.5px;line-height:16px;color:#262626;letter-spacing:0.153px;">Mining &amp; Logging</div>
<div class="b" style="left:0;top:0"><div class="t" style="left:285.80px;top:688px;font-size:14.5px;line-height:16px;color:#262626;transform:scaleX(0.8143);transform-origin:left top;">REVLNNCS</div><div class="t" style="left:357.10px;top:688px;font-size:14.5px;line-height:16px;color:#262626;letter-spacing:0.346px;">Index</div></div>
<div class="t" style="left:488.44px;top:688px;font-size:14.5px;line-height:16px;color:#262626;letter-spacing:-0.120px;">0.10</div>
<div class="t" style="left:570.33px;top:688px;font-size:14.5px;line-height:16px;color:#262626;letter-spacing:-0.120px;">-0.70</div>
<div class="t" style="left:656.83px;top:688px;font-size:14.5px;line-height:16px;color:#262626;letter-spacing:-0.120px;">-1.40</div>
<div class="t" style="left:743.33px;top:688px;font-size:14.5px;line-height:16px;color:#262626;letter-spacing:-0.120px;">-0.70</div>
<div class="t" style="left:829.83px;top:688px;font-size:14.5px;line-height:16px;color:#262626;letter-spacing:-0.120px;">-0.10</div>
<div class="t" style="left:916.43px;top:688px;font-size:14.5px;line-height:16px;color:#262626;letter-spacing:-0.120px;">-1.20</div>
<div class="t" style="left:1003.43px;top:688px;font-size:14.5px;line-height:16px;color:#262626;letter-spacing:-0.120px;">-0.60</div>
<div class="t" style="left:1090.23px;top:688px;font-size:14.5px;line-height:16px;color:#262626;letter-spacing:-0.120px;">-0.30</div>
<div class="t" style="left:88.00px;top:707px;font-size:14.5px;line-height:16px;color:#262626;letter-spacing:0.175px;">Construction</div>
<div class="b" style="left:0;top:0"><div class="t" style="left:285.80px;top:707px;font-size:14.5px;line-height:16px;color:#262626;transform:scaleX(0.8004);transform-origin:left top;">REVLNCCS</div><div class="t" style="left:356.00px;top:707px;font-size:14.5px;line-height:16px;color:#262626;letter-spacing:0.346px;">Index</div></div>
<div class="t" style="left:488.44px;top:707px;font-size:14.5px;line-height:16px;color:#262626;letter-spacing:-0.120px;">5.30</div>
<div class="t" style="left:575.04px;top:707px;font-size:14.5px;line-height:16px;color:#262626;letter-spacing:-0.120px;">5.40</div>
<div class="t" style="left:656.83px;top:707px;font-size:14.5px;line-height:16px;color:#262626;letter-spacing:-0.120px;">-0.40</div>
<div class="t" style="left:743.33px;top:707px;font-size:14.5px;line-height:16px;color:#262626;letter-spacing:-0.120px;">-3.30</div>
<div class="t" style="left:826.59px;top:707px;font-size:14.5px;line-height:16px;color:#262626;letter-spacing:-0.120px;">10.00</div>
<div class="t" style="left:916.43px;top:707px;font-size:14.5px;line-height:16px;color:#262626;letter-spacing:-0.120px;">-8.10</div>
<div class="t" style="left:1008.14px;top:707px;font-size:14.5px;line-height:16px;color:#262626;letter-spacing:-0.120px;">6.50</div>
<div class="t" style="left:1088.07px;top:707px;font-size:14.5px;line-height:16px;color:#262626;letter-spacing:-0.120px;">11.20</div>
<div class="t" style="left:88.00px;top:726px;font-size:14.5px;line-height:16px;color:#262626;letter-spacing:0.201px;">Manufacturing</div>
<div class="b" style="left:0;top:0"><div class="t" style="left:285.80px;top:726px;font-size:14.5px;line-height:16px;color:#262626;transform:scaleX(0.8105);transform-origin:left top;">REVLNMCS</div><div class="t" style="left:358.10px;top:726px;font-size:14.5px;line-height:16px;color:#262626;letter-spacing:0.346px;">Index</div></div>
<div class="t" style="left:483.73px;top:726px;font-size:14.5px;line-height:16px;color:#262626;letter-spacing:-0.120px;">-8.70</div>
<div class="t" style="left:567.09px;top:726px;font-size:14.5px;line-height:16px;color:#262626;letter-spacing:-0.120px;">10.10</div>
<div class="t" style="left:661.54px;top:726px;font-size:14.5px;line-height:16px;color:#262626;letter-spacing:-0.120px;">2.10</div>
<div class="t" style="left:748.04px;top:726px;font-size:14.5px;line-height:16px;color:#262626;letter-spacing:-0.120px;">0.20</div>
<div class="t" style="left:826.59px;top:726px;font-size:14.5px;line-height:16px;color:#262626;letter-spacing:-0.120px;">14.70</div>
<div class="t" style="left:916.43px;top:726px;font-size:14.5px;line-height:16px;color:#262626;letter-spacing:-0.120px;">-9.90</div>
<div class="t" style="left:1008.14px;top:726px;font-size:14.5px;line-height:16px;color:#262626;letter-spacing:-0.120px;">9.20</div>
<div class="t" style="left:1094.94px;top:726px;font-size:14.5px;line-height:16px;color:#262626;letter-spacing:-0.120px;">5.20</div>
<svg style="left:24.3px;top:747.1600000000001px" width="12.9" height="12.9" viewBox="0 0 12.6 12.6"><rect x="0.75" y="0.75" width="11.1" height="11.1" rx="2.2" ry="2.2" fill="#a8cdf4" stroke="#2b4672" stroke-width="1.5"/><path d="M3.3 6.6 L5.7 9 L9.6 3.9" fill="none" stroke="#0b1230" stroke-width="2"/></svg>
<svg style="left:60.4px;top:751.96px" width="7" height="4" viewBox="0 0 7 4"><path d="M0 0 L7 0 L3.5 3.6 Z" fill="#d4d4d4"/></svg>
<svg style="left:3px;top:746.86px" width="14" height="14" viewBox="0 0 14 14"><circle cx="7" cy="7" r="3" fill="none" stroke="#cfcfcf" stroke-width="1.3"/><path d="M7 0.5 V4 M7 10 V13.5 M0.5 7 H4 M10 7 H13.5" stroke="#cfcfcf" stroke-width="1.3"/></svg>
<div class="t" style="left:75.30px;top:745px;font-size:14.5px;line-height:16px;color:#262626;letter-spacing:0.546px;">Service Providing Industries</div>
<div class="b" style="left:0;top:0"><div class="t" style="left:285.80px;top:745px;font-size:14.5px;line-height:16px;color:#262626;transform:scaleX(0.8085);transform-origin:left top;">REVLNSCS</div><div class="t" style="left:356.00px;top:745px;font-size:14.5px;line-height:16px;color:#262626;letter-spacing:0.346px;">Index</div></div>
<div class="t" style="left:480.49px;top:745px;font-size:14.5px;line-height:16px;color:#262626;letter-spacing:-0.120px;">45.60</div>
<div class="t" style="left:567.09px;top:745px;font-size:14.5px;line-height:16px;color:#262626;letter-spacing:-0.120px;">49.10</div>
<div class="t" style="left:653.59px;top:745px;font-size:14.5px;line-height:16px;color:#262626;letter-spacing:-0.120px;">39.00</div>
<div class="t" style="left:743.33px;top:745px;font-size:14.5px;line-height:16px;color:#262626;letter-spacing:-0.120px;">-5.60</div>
<div class="t" style="left:826.59px;top:745px;font-size:14.5px;line-height:16px;color:#262626;letter-spacing:-0.120px;">21.10</div>
<div class="t" style="left:913.19px;top:745px;font-size:14.5px;line-height:16px;color:#262626;letter-spacing:-0.120px;">84.00</div>
<div class="t" style="left:1000.19px;top:745px;font-size:14.5px;line-height:16px;color:#262626;letter-spacing:-0.120px;">18.30</div>
<div class="t" style="left:1086.99px;top:745px;font-size:14.5px;line-height:16px;color:#262626;letter-spacing:-0.120px;">41.60</div>
<div class="t" style="left:88.00px;top:765px;font-size:14.5px;line-height:16px;color:#262626;letter-spacing:-0.020px;">Wholesale Trade</div>
<div class="b" style="left:0;top:0"><div class="t" style="left:285.80px;top:765px;font-size:14.5px;line-height:16px;color:#262626;transform:scaleX(0.7946);transform-origin:left top;">REVLNWCS</div><div class="t" style="left:358.10px;top:765px;font-size:14.5px;line-height:16px;color:#262626;letter-spacing:0.346px;">Index</div></div>
<div class="t" style="left:483.73px;top:765px;font-size:14.5px;line-height:16px;color:#262626;letter-spacing:-0.120px;">-5.10</div>
<div class="t" style="left:570.33px;top:765px;font-size:14.5px;line-height:16px;color:#262626;letter-spacing:-0.120px;">-2.30</div>
<div class="t" style="left:656.83px;top:765px;font-size:14.5px;line-height:16px;color:#262626;letter-spacing:-0.120px;">-3.90</div>
<div class="t" style="left:743.33px;top:765px;font-size:14.5px;line-height:16px;color:#262626;letter-spacing:-0.120px;">-9.10</div>
<div class="t" style="left:829.83px;top:765px;font-size:14.5px;line-height:16px;color:#262626;letter-spacing:-0.120px;">-3.30</div>
<div class="t" style="left:909.56px;top:765px;font-size:14.5px;line-height:16px;color:#262626;letter-spacing:-0.120px;">-11.20</div>
<div class="t" style="left:1003.43px;top:765px;font-size:14.5px;line-height:16px;color:#262626;letter-spacing:-0.120px;">-0.40</div>
<div class="t" style="left:1094.94px;top:765px;font-size:14.5px;line-height:16px;color:#262626;letter-spacing:-0.120px;">4.30</div>
<div class="t" style="left:88.00px;top:784px;font-size:14.5px;line-height:16px;color:#262626;letter-spacing:0.318px;">Retail Trade</div>
<div class="b" style="left:0;top:0"><div class="t" style="left:285.80px;top:784px;font-size:14.5px;line-height:16px;color:#262626;transform:scaleX(0.8143);transform-origin:left top;">REVLNRCS</div><div class="t" style="left:357.10px;top:784px;font-size:14.5px;line-height:16px;color:#262626;letter-spacing:0.346px;">Index</div></div>
<div class="t" style="left:475.79px;top:784px;font-size:14.5px;line-height:16px;color:#262626;letter-spacing:-0.120px;">-19.30</div>
<div class="t" style="left:562.39px;top:784px;font-size:14.5px;line-height:16px;color:#262626;letter-spacing:-0.120px;">-20.60</div>
<div class="t" style="left:648.89px;top:784px;font-size:14.5px;line-height:16px;color:#262626;letter-spacing:-0.120px;">-16.00</div>
<div class="t" style="left:735.39px;top:784px;font-size:14.5px;line-height:16px;color:#262626;letter-spacing:-0.120px;">-19.80</div>
<div class="t" style="left:829.83px;top:784px;font-size:14.5px;line-height:16px;color:#262626;letter-spacing:-0.120px;">-6.90</div>
<div class="t" style="left:908.49px;top:784px;font-size:14.5px;line-height:16px;color:#262626;letter-spacing:-0.120px;">-37.80</div>
<div class="t" style="left:995.49px;top:784px;font-size:14.5px;line-height:16px;color:#262626;letter-spacing:-0.120px;">-71.40</div>
<div class="t" style="left:1086.99px;top:784px;font-size:14.5px;line-height:16px;color:#262626;letter-spacing:-0.120px;">40.10</div>
<div class="t" style="left:88.00px;top:803px;font-size:14.5px;line-height:16px;color:#262626;letter-spacing:-0.035px;">Transportation &amp; Warehousi…</div>
<div class="b" style="left:0;top:0"><div class="t" style="left:285.80px;top:803px;font-size:14.5px;line-height:16px;color:#262626;transform:scaleX(0.8171);transform-origin:left top;">REVLNTCS</div><div class="t" style="left:356.00px;top:803px;font-size:14.5px;line-height:16px;color:#262626;letter-spacing:0.346px;">Index</div></div>
<div class="t" style="left:480.49px;top:803px;font-size:14.5px;line-height:16px;color:#262626;letter-spacing:-0.120px;">13.70</div>
<div class="t" style="left:575.04px;top:803px;font-size:14.5px;line-height:16px;color:#262626;letter-spacing:-0.120px;">0.50</div>
<div class="t" style="left:661.54px;top:803px;font-size:14.5px;line-height:16px;color:#262626;letter-spacing:-0.120px;">6.90</div>
<div class="t" style="left:743.33px;top:803px;font-size:14.5px;line-height:16px;color:#262626;letter-spacing:-0.120px;">-6.00</div>
<div class="t" style="left:829.83px;top:803px;font-size:14.5px;line-height:16px;color:#262626;letter-spacing:-0.120px;">-6.30</div>
<div class="t" style="left:908.49px;top:803px;font-size:14.5px;line-height:16px;color:#262626;letter-spacing:-0.120px;">-16.50</div>
<div class="t" style="left:1003.43px;top:803px;font-size:14.5px;line-height:16px;color:#262626;letter-spacing:-0.120px;">-5.90</div>
<div class="t" style="left:1094.94px;top:803px;font-size:14.5px;line-height:16px;color:#262626;letter-spacing:-0.120px;">0.00</div>
<div class="t" style="left:88.00px;top:823px;font-size:14.5px;line-height:16px;color:#262626;letter-spacing:0.586px;">Utilities</div>
<div class="b" style="left:0;top:0"><div class="t" style="left:285.80px;top:823px;font-size:14.5px;line-height:16px;color:#262626;transform:scaleX(0.8143);transform-origin:left top;">REVLNUCS</div><div class="t" style="left:357.10px;top:823px;font-size:14.5px;line-height:16px;color:#262626;letter-spacing:0.346px;">Index</div></div>
<div class="t" style="left:488.44px;top:823px;font-size:14.5px;line-height:16px;color:#262626;letter-spacing:-0.120px;">1.20</div>
<div class="t" style="left:575.04px;top:823px;font-size:14.5px;line-height:16px;color:#262626;letter-spacing:-0.120px;">1.20</div>
<div class="t" style="left:661.54px;top:823px;font-size:14.5px;line-height:16px;color:#262626;letter-spacing:-0.120px;">0.90</div>
<div class="t" style="left:748.04px;top:823px;font-size:14.5px;line-height:16px;color:#262626;letter-spacing:-0.120px;">1.80</div>
<div class="t" style="left:834.54px;top:823px;font-size:14.5px;line-height:16px;color:#262626;letter-spacing:-0.120px;">2.70</div>
<div class="t" style="left:921.14px;top:823px;font-size:14.5px;line-height:16px;color:#262626;letter-spacing:-0.120px;">0.60</div>
<div class="t" style="left:1008.14px;top:823px;font-size:14.5px;line-height:16px;color:#262626;letter-spacing:-0.120px;">2.00</div>
<div class="t" style="left:1094.94px;top:823px;font-size:14.5px;line-height:16px;color:#262626;letter-spacing:-0.120px;">0.40</div>
<div class="t" style="left:88.00px;top:842px;font-size:14.5px;line-height:16px;color:#262626;letter-spacing:0.679px;">Information</div>
<div class="b" style="left:0;top:0"><div class="t" style="left:285.80px;top:842px;font-size:14.5px;line-height:16px;color:#262626;transform:scaleX(0.8356);transform-origin:left top;">REVLNICS</div><div class="t" style="left:353.40px;top:842px;font-size:14.5px;line-height:16px;color:#262626;letter-spacing:0.346px;">Index</div></div>
<div class="t" style="left:483.73px;top:842px;font-size:14.5px;line-height:16px;color:#262626;letter-spacing:-0.120px;">-5.90</div>
<div class="t" style="left:575.04px;top:842px;font-size:14.5px;line-height:16px;color:#262626;letter-spacing:-0.120px;">6.30</div>
<div class="t" style="left:661.54px;top:842px;font-size:14.5px;line-height:16px;color:#262626;letter-spacing:-0.120px;">7.90</div>
<div class="t" style="left:748.04px;top:842px;font-size:14.5px;line-height:16px;color:#262626;letter-spacing:-0.120px;">4.70</div>
<div class="t" style="left:826.59px;top:842px;font-size:14.5px;line-height:16px;color:#262626;letter-spacing:-0.120px;">17.10</div>
<div class="t" style="left:921.14px;top:842px;font-size:14.5px;line-height:16px;color:#262626;letter-spacing:-0.120px;">3.60</div>
<div class="t" style="left:1008.14px;top:842px;font-size:14.5px;line-height:16px;color:#262626;letter-spacing:-0.120px;">4.40</div>
<div class="t" style="left:1082.29px;top:842px;font-size:14.5px;line-height:16px;color:#262626;letter-spacing:-0.120px;">-10.00</div>
<div class="t" style="left:88.00px;top:861px;font-size:14.5px;line-height:16px;color:#262626;letter-spacing:0.452px;">Financial Activities</div>
<div class="b" style="left:0;top:0"><div class="t" style="left:285.80px;top:861px;font-size:14.5px;line-height:16px;color:#262626;transform:scaleX(0.8313);transform-origin:left top;">REVLNFCS</div><div class="t" style="left:357.10px;top:861px;font-size:14.5px;line-height:16px;color:#262626;letter-spacing:0.346px;">Index</div></div>
<div class="t" style="left:480.49px;top:861px;font-size:14.5px;line-height:16px;color:#262626;letter-spacing:-0.120px;">16.30</div>
<div class="t" style="left:567.09px;top:861px;font-size:14.5px;line-height:16px;color:#262626;letter-spacing:-0.120px;">19.50</div>
<div class="t" style="left:653.59px;top:861px;font-size:14.5px;line-height:16px;color:#262626;letter-spacing:-0.120px;">16.30</div>
<div class="t" style="left:740.09px;top:861px;font-size:14.5px;line-height:16px;color:#262626;letter-spacing:-0.120px;">20.70</div>
<div class="t" style="left:826.59px;top:861px;font-size:14.5px;line-height:16px;color:#262626;letter-spacing:-0.120px;">60.50</div>
<div class="t" style="left:913.19px;top:861px;font-size:14.5px;line-height:16px;color:#262626;letter-spacing:-0.120px;">28.30</div>
<div class="t" style="left:1000.19px;top:861px;font-size:14.5px;line-height:16px;color:#262626;letter-spacing:-0.120px;">28.10</div>
<div class="t" style="left:1090.23px;top:861px;font-size:14.5px;line-height:16px;color:#262626;letter-spacing:-0.120px;">-0.60</div>
<div class="t" style="left:88.00px;top:880px;font-size:14.5px;line-height:16px;color:#262626;letter-spacing:0.014px;">Professional &amp; Business Se…</div>
<div class="b" style="left:0;top:0"><div class="t" style="left:285.80px;top:880px;font-size:14.5px;line-height:16px;color:#262626;transform:scaleX(0.8226);transform-origin:left top;">REVLNBCS</div><div class="t" style="left:357.10px;top:880px;font-size:14.5px;line-height:16px;color:#262626;letter-spacing:0.346px;">Index</div></div>
<div class="t" style="left:480.49px;top:880px;font-size:14.5px;line-height:16px;color:#262626;letter-spacing:-0.120px;">23.30</div>
<div class="t" style="left:567.09px;top:880px;font-size:14.5px;line-height:16px;color:#262626;letter-spacing:-0.120px;">25.10</div>
<div class="t" style="left:653.59px;top:880px;font-size:14.5px;line-height:16px;color:#262626;letter-spacing:-0.120px;">15.40</div>
<div class="t" style="left:740.09px;top:880px;font-size:14.5px;line-height:16px;color:#262626;letter-spacing:-0.120px;">19.10</div>
<div class="t" style="left:826.59px;top:880px;font-size:14.5px;line-height:16px;color:#262626;letter-spacing:-0.120px;">37.50</div>
<div class="t" style="left:916.43px;top:880px;font-size:14.5px;line-height:16px;color:#262626;letter-spacing:-0.120px;">-1.20</div>
<div class="t" style="left:1000.19px;top:880px;font-size:14.5px;line-height:16px;color:#262626;letter-spacing:-0.120px;">26.40</div>
<div class="t" style="left:1082.29px;top:880px;font-size:14.5px;line-height:16px;color:#262626;letter-spacing:-0.120px;">-10.90</div>
<div class="t" style="left:88.00px;top:900px;font-size:14.5px;line-height:16px;color:#262626;letter-spacing:0.231px;">Education &amp; Health Services</div>
<div class="b" style="left:0;top:0"><div class="t" style="left:285.80px;top:900px;font-size:14.5px;line-height:16px;color:#262626;transform:scaleX(0.8226);transform-origin:left top;">REVLNECS</div><div class="t" style="left:357.10px;top:900px;font-size:14.5px;line-height:16px;color:#262626;letter-spacing:0.346px;">Index</div></div>
<div class="t" style="left:480.49px;top:900px;font-size:14.5px;line-height:16px;color:#262626;letter-spacing:-0.120px;">37.00</div>
<div class="t" style="left:567.09px;top:900px;font-size:14.5px;line-height:16px;color:#262626;letter-spacing:-0.120px;">45.20</div>
<div class="t" style="left:653.59px;top:900px;font-size:14.5px;line-height:16px;color:#262626;letter-spacing:-0.120px;">38.20</div>
<div class="t" style="left:740.09px;top:900px;font-size:14.5px;line-height:16px;color:#262626;letter-spacing:-0.120px;">28.10</div>
<div class="t" style="left:826.59px;top:900px;font-size:14.5px;line-height:16px;color:#262626;letter-spacing:-0.120px;">57.10</div>
<div class="t" style="left:913.19px;top:900px;font-size:14.5px;line-height:16px;color:#262626;letter-spacing:-0.120px;">13.80</div>
<div class="t" style="left:1000.19px;top:900px;font-size:14.5px;line-height:16px;color:#262626;letter-spacing:-0.120px;">47.10</div>
<div class="t" style="left:1086.99px;top:900px;font-size:14.5px;line-height:16px;color:#262626;letter-spacing:-0.120px;">45.60</div>
<div class="t" style="left:88.00px;top:919px;font-size:14.5px;line-height:16px;color:#262626;letter-spacing:0.420px;">Leisure &amp; Hospitality</div>
<div class="b" style="left:0;top:0"><div class="t" style="left:285.80px;top:919px;font-size:14.5px;line-height:16px;color:#262626;transform:scaleX(0.8399);transform-origin:left top;">REVLNLCS</div><div class="t" style="left:357.10px;top:919px;font-size:14.5px;line-height:16px;color:#262626;letter-spacing:0.346px;">Index</div></div>
<div class="t" style="left:475.79px;top:919px;font-size:14.5px;line-height:16px;color:#262626;letter-spacing:-0.120px;">-16.30</div>
<div class="t" style="left:562.39px;top:919px;font-size:14.5px;line-height:16px;color:#262626;letter-spacing:-0.120px;">-25.60</div>
<div class="t" style="left:648.89px;top:919px;font-size:14.5px;line-height:16px;color:#262626;letter-spacing:-0.120px;">-25.20</div>
<div class="t" style="left:735.39px;top:919px;font-size:14.5px;line-height:16px;color:#262626;letter-spacing:-0.120px;">-36.40</div>
<div class="t" style="left:813.94px;top:919px;font-size:14.5px;line-height:16px;color:#262626;letter-spacing:-0.120px;">-133.20</div>
<div class="t" style="left:906.33px;top:919px;font-size:14.5px;line-height:16px;color:#262626;letter-spacing:-0.120px;">116.40</div>
<div class="t" style="left:995.49px;top:919px;font-size:14.5px;line-height:16px;color:#262626;letter-spacing:-0.120px;">-17.20</div>
<div class="t" style="left:1082.29px;top:919px;font-size:14.5px;line-height:16px;color:#262626;letter-spacing:-0.120px;">-34.20</div>
<div class="t" style="left:88.00px;top:938px;font-size:14.5px;line-height:16px;color:#262626;letter-spacing:0.222px;">Other Services</div>
<div class="b" style="left:0;top:0"><div class="t" style="left:285.80px;top:938px;font-size:14.5px;line-height:16px;color:#262626;transform:scaleX(0.8060);transform-origin:left top;">REVLNOCS</div><div class="t" style="left:357.10px;top:938px;font-size:14.5px;line-height:16px;color:#262626;letter-spacing:0.346px;">Index</div></div>
<div class="t" style="left:488.44px;top:938px;font-size:14.5px;line-height:16px;color:#262626;letter-spacing:-0.120px;">0.70</div>
<div class="t" style="left:570.33px;top:938px;font-size:14.5px;line-height:16px;color:#262626;letter-spacing:-0.120px;">-0.20</div>
<div class="t" style="left:656.83px;top:938px;font-size:14.5px;line-height:16px;color:#262626;letter-spacing:-0.120px;">-1.50</div>
<div class="t" style="left:743.33px;top:938px;font-size:14.5px;line-height:16px;color:#262626;letter-spacing:-0.120px;">-8.70</div>
<div class="t" style="left:829.83px;top:938px;font-size:14.5px;line-height:16px;color:#262626;letter-spacing:-0.120px;">-4.10</div>
<div class="t" style="left:908.49px;top:938px;font-size:14.5px;line-height:16px;color:#262626;letter-spacing:-0.120px;">-12.00</div>
<div class="t" style="left:1008.14px;top:938px;font-size:14.5px;line-height:16px;color:#262626;letter-spacing:-0.120px;">5.20</div>
<div class="t" style="left:1094.94px;top:938px;font-size:14.5px;line-height:16px;color:#262626;letter-spacing:-0.120px;">6.90</div>
<svg style="left:24.3px;top:959.02px" width="12.9" height="12.9" viewBox="0 0 12.6 12.6"><rect x="0.75" y="0.75" width="11.1" height="11.1" rx="2.2" ry="2.2" fill="#a8cdf4" stroke="#2b4672" stroke-width="1.5"/><path d="M3.3 6.6 L5.7 9 L9.6 3.9" fill="none" stroke="#0b1230" stroke-width="2"/></svg>
<div class="t" style="left:75.30px;top:957px;font-size:14.5px;line-height:16px;color:#262626;letter-spacing:0.171px;">Government</div>
<div class="b" style="left:0;top:0"><div class="t" style="left:285.80px;top:957px;font-size:14.5px;line-height:16px;color:#262626;transform:scaleX(0.8226);transform-origin:left top;">REVLNVCS</div><div class="t" style="left:357.10px;top:957px;font-size:14.5px;line-height:16px;color:#262626;letter-spacing:0.346px;">Index</div></div>
<div class="t" style="left:483.73px;top:957px;font-size:14.5px;line-height:16px;color:#262626;letter-spacing:-0.120px;">-8.70</div>
<div class="t" style="left:562.39px;top:957px;font-size:14.5px;line-height:16px;color:#262626;letter-spacing:-0.120px;">-17.00</div>
<div class="t" style="left:648.89px;top:957px;font-size:14.5px;line-height:16px;color:#262626;letter-spacing:-0.120px;">-20.10</div>
<div class="t" style="left:735.39px;top:957px;font-size:14.5px;line-height:16px;color:#262626;letter-spacing:-0.120px;">-16.60</div>
<div class="t" style="left:826.59px;top:957px;font-size:14.5px;line-height:16px;color:#262626;letter-spacing:-0.120px;">12.50</div>
<div class="t" style="left:908.49px;top:957px;font-size:14.5px;line-height:16px;color:#262626;letter-spacing:-0.120px;">-24.10</div>
<div class="t" style="left:996.56px;top:957px;font-size:14.5px;line-height:16px;color:#262626;letter-spacing:-0.120px;">-11.60</div>
<div class="t" style="left:1090.23px;top:957px;font-size:14.5px;line-height:16px;color:#262626;letter-spacing:-0.120px;">-0.50</div>
<svg style="left:24.3px;top:978.28px" width="12.9" height="12.9" viewBox="0 0 12.6 12.6"><rect x="0.75" y="0.75" width="11.1" height="11.1" rx="2.2" ry="2.2" fill="#a8cdf4" stroke="#2b4672" stroke-width="1.5"/><path d="M3.3 6.6 L5.7 9 L9.6 3.9" fill="none" stroke="#0b1230" stroke-width="2"/></svg>
<div class="t" style="left:75.30px;top:977px;font-size:14.5px;line-height:16px;color:#262626;letter-spacing:0.236px;">Unclassified</div>
<div class="b" style="left:0;top:0"><div class="t" style="left:285.80px;top:977px;font-size:14.5px;line-height:16px;color:#262626;transform:scaleX(0.8313);transform-origin:left top;">REVLNZCS</div><div class="t" style="left:357.10px;top:977px;font-size:14.5px;line-height:16px;color:#262626;letter-spacing:0.346px;">Index</div></div>
<div class="t" style="left:483.73px;top:977px;font-size:14.5px;line-height:16px;color:#262626;letter-spacing:-0.120px;">-0.70</div>
<div class="t" style="left:575.04px;top:977px;font-size:14.5px;line-height:16px;color:#262626;letter-spacing:-0.120px;">0.10</div>
<div class="t" style="left:656.83px;top:977px;font-size:14.5px;line-height:16px;color:#262626;letter-spacing:-0.120px;">-0.70</div>
<div class="t" style="left:743.33px;top:977px;font-size:14.5px;line-height:16px;color:#262626;letter-spacing:-0.120px;">-1.20</div>
<div class="t" style="left:829.83px;top:977px;font-size:14.5px;line-height:16px;color:#262626;letter-spacing:-0.120px;">-2.50</div>
<div class="t" style="left:916.43px;top:977px;font-size:14.5px;line-height:16px;color:#262626;letter-spacing:-0.120px;">-1.10</div>
<div class="t" style="left:1008.14px;top:977px;font-size:14.5px;line-height:16px;color:#262626;letter-spacing:-0.120px;">1.40</div>
<div class="t" style="left:1094.94px;top:977px;font-size:14.5px;line-height:16px;color:#262626;letter-spacing:-0.120px;">2.20</div>
</div></body></html>
